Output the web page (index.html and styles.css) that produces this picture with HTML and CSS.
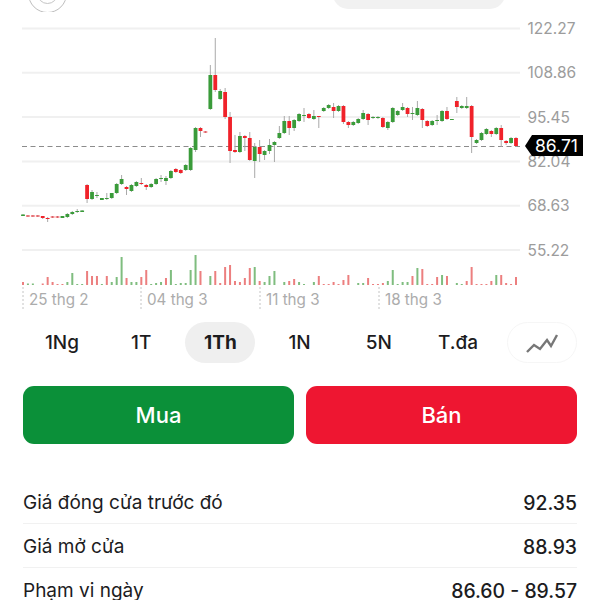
FILE: index.html
```html
<!DOCTYPE html>
<html lang="vi">
<head>
    <meta charset="UTF-8">
    <meta name="viewport" content="width=device-width, initial-scale=1.0">
    <title>Biểu đồ giá</title>
    <link rel="stylesheet" href="styles.css">
</head>
<body>
    <div class="page">
        <div class="topbar">
            <div class="round-btn"><div class="round-btn-inner"></div></div>
            <div class="top-pill"></div>
        </div>

        <svg class="chart" id="chart" width="600" height="300" viewBox="0 0 600 300" xmlns="http://www.w3.org/2000/svg"></svg>

        <div class="ranges">
            <button class="range">1Ng</button>
            <button class="range">1T</button>
            <button class="range active">1Th</button>
            <button class="range">1N</button>
            <button class="range">5N</button>
            <button class="range">T.đa</button>
            <button class="range chart-type">
                <svg width="34" height="22" viewBox="0 0 34 22" xmlns="http://www.w3.org/2000/svg">
                    <polyline class="trend" points="2,20 9,13 15,17 22,8 26,14 32,3"/>
                </svg>
            </button>
        </div>

        <div class="actions">
            <button class="action buy">Mua</button>
            <button class="action sell">Bán</button>
        </div>

        <div class="stats">
            <div class="stat"><span class="stat-name">Giá đóng cửa trước đó</span><span class="stat-value">92.35</span></div>
            <div class="stat"><span class="stat-name">Giá mở cửa</span><span class="stat-value">88.93</span></div>
            <div class="stat"><span class="stat-name">Phạm vi ngày</span><span class="stat-value">86.60 - 89.57</span></div>
        </div>
    </div>

    <script src="chart.js"></script>
</body>
</html>
```

FILE: styles.css
```css
html, body {
    margin: 0;
    padding: 0;
    background-color: white;
}
body {
    font-family: Inter, "Liberation Sans", sans-serif;
    color: #1c1c1e;
}
.page {
    width: 600px;
    height: 600px;
    overflow: hidden;
}
.topbar {
    display: flex;
    justify-content: space-between;
    height: 12px;
    padding: 0 95px 0 28px;
    overflow: hidden;
}
.round-btn {
    width: 37px;
    height: 37px;
    margin-top: -26px;
    border: 1px solid #bdbdbd;
    border-radius: 50%;
    display: flex;
    align-items: center;
    justify-content: center;
}
.round-btn-inner {
    width: 19px;
    height: 19px;
    border: 1px solid #c4c4c4;
    border-radius: 50%;
}
.top-pill {
    width: 172px;
    height: 30px;
    margin-top: -21px;
    background-color: #f1f1f1;
    border-radius: 15px;
}
.chart {
    display: block;
}
.grid-line {
    stroke: #f0f0f0;
    stroke-width: 2;
}
.last-line {
    stroke: #8c8c8c;
    stroke-width: 1;
    stroke-dasharray: 5 3.5;
}
.date-tick {
    stroke: #c4c4c4;
    stroke-width: 1;
    stroke-dasharray: 2 2;
}
.axis-label {
    font-size: 15.5px;
    fill: #9c9c9c;
}
.date-label {
    font-size: 15.2px;
    fill: #acacac;
}
.wick {
    stroke: #a9a9a9;
    stroke-width: 1;
}
.up {
    fill: #3a9b3a;
}
.down {
    fill: #f0222a;
}
.vol-up {
    fill: #7fbd7f;
}
.vol-down {
    fill: #ec7f7f;
}
.price-tag {
    fill: black;
}
.price-text {
    font-size: 17.5px;
    fill: white;
}
.ranges {
    display: flex;
    gap: 9.2px;
    padding: 0 23px 0 27px;
    margin-top: 10px;
}
.range {
    width: 70px;
    height: 41px;
    padding: 0;
    font-family: inherit;
    font-size: 19px;
    font-weight: 500;
    color: #1c1c1e;
    background: none;
    border: none;
    border-radius: 21px;
}
.range.active {
    font-weight: 700;
    background-color: #efefef;
}
.chart-type {
    display: flex;
    align-items: center;
    justify-content: center;
    margin-left: auto;
    border: 1px solid #f6f6f6;
}
.trend {
    fill: none;
    stroke: #777;
    stroke-width: 2.4;
}
.actions {
    display: flex;
    gap: 12px;
    padding: 0 23px;
    margin-top: 23px;
}
.action {
    flex: 1;
    height: 58px;
    font-family: inherit;
    font-size: 22px;
    font-weight: 500;
    color: white;
    border: none;
    border-radius: 11px;
}
.buy {
    background-color: #0b9039;
}
.sell {
    background-color: #ee1631;
}
.stats {
    margin: 36px 23px 0;
}
.stat {
    display: flex;
    justify-content: space-between;
    align-items: center;
    height: 41px;
    padding-top: 2px;
    border-bottom: 1px solid #f1f1f1;
}
.stat-name {
    font-size: 19px;
}
.stat-value {
    font-size: 19.4px;
    font-weight: 500;
}
```

FILE: chart.js
```js
// candles: [top, bottom, wickTop, wickBottom, up?] in chart pixels
const candles = [
    [214.5,216,214,216,1],[215.5,216.5,215,217,0],[215.5,216.5,215,217,0],[215.5,216.5,215,217,0],[216,218,216,219,0],
    [218,219,217,222,0],[216.5,217.5,216,218,0],[216.5,217.5,216,218,0],[216,218,216,218,1],[214,217,213,218,1],
    [212,214,211,215,1],[211,212,209,213,1],[210.5,212,210,212,1],[185,199,184,203,0],[192,199,190,200,1],
    [195,196,192,198,1],[198,200,198,200,1],[198,199,193,200,1],[193,198,193,199,1],[184,193,183,194,1],
    [179,184,175,185,1],[187,189,186,195,0],[185,191,184,192,1],[182,186,181,187,1],[183,184,178,185,0],
    [185,187,184,190,0],[184,187,183,188,1],[179,184,178,185,1],[178,179,175,182,1],[178,181,176,185,1],
    [171,178,170,179,1],[169,172,168,173,0],[170,173,169,174,0],[165,170,164,171,1],[148,170,147,171,1],
    [128,150,127,152,1],[128,131,127,137,0],[131.5,132.5,131,133,0],[75,109,65,110,1],[75,90,38,92,0],
    [91,99,89,100,1],[92,117,88,119,0],[117,151,112,163,0],[150,152,135,153,0],[136,152,132,153,1],
    [136,138,135,151,0],[138,160,132,161,0],[147,161,143,178,1],[147,154,140,162,0],[151,155,150,160,1],
    [145,151,139,154,1],[142,145,141,162,1],[133,138,126,139,1],[121,133,116,134,1],[121,128,116,135,0],
    [120,128,119,131,1],[114,121,113,122,1],[115,116,108,122,1],[114,118,113,119,0],[116,119,110,120,1],
    [116,117,116,128,0],[108,111,107,112,1],[105,108,104,109,1],[107,111,103,118,0],[106,111,105,112,1],
    [106,122,105,124,0],[122,125,121,128,0],[122,125,121,126,1],[119,123,118,124,1],[113,119,110,120,1],
    [114,120,113,125,0],[117,118,116,119,1],[117,118,116,119,1],[118,127,117,128,0],[122,128,121,130,1],
    [108,122,107,123,1],[111,115,110,116,1],[107,110,103,111,1],[108,114,107,117,0],[113,114,107,120,1],
    [108,115,101,116,1],[109,120,108,128,0],[121,126,120,127,0],[121,125,120,126,1],[120,121,115,125,1],
    [111,121,110,122,1],[111,119,107,120,0],[119,120,119,120,1],[101,107,97,113,0],[106,108,105,109,1],
    [106,108,97,109,1],[106,137,105,153,0],[140,143,139,144,1],[133,140,132,141,1],[129,134,128,135,1],
    [131,134,130,137,0],[128,134,127,135,1],[128,140,125,147,0],[141,143,140,145,0],[138,143,137,144,1],
    [138,146,137,147,0]
];

// volume heights, negative means a red bar
const volumes = [
    -3,1.5,1.5,0,-1.5,-8,-3,-1,-1,3,12,1,1,-14,-9,-9,1,-9,3,8,
    28,-7,3,3,-8,-15,1,2,3,-7,15,1,2,2,15,30,-14,0,9,-14,
    -2,-18,-20,-4,-3,-7,-17,18,-4,3,9,14,0,3,-4,-6,3,1,0,3,
    -9,-1,-1,-3,-1,-5,-10,0,2,2,-7,-1,-1,-2,4,15,1,3,3,-9,
    17,-16,-1,-1,-8,10,-9,0,2,1,-4,-18,-1,-1,-1,-4,10,-10,-2,-1,
    -8
];

const axisLabels = ['122.27', '108.86', '95.45', '82.04', '68.63', '55.22'];
const dates = [[23, '25 thg 2'], [141, '04 thg 3'], [260, '11 thg 3'], [379, '18 thg 3']];

const chart = document.getElementById('chart');
const baseY = -12; // the svg starts under the top bar

function add(tag, attrs, text) {
    const el = document.createElementNS('http://www.w3.org/2000/svg', tag);
    for (const key in attrs) {
        el.setAttribute(key, attrs[key]);
    }
    if (text) {
        el.textContent = text;
    }
    chart.appendChild(el);
    return el;
}

function candleX(i) {
    return 23 + i * 4.93;
}

axisLabels.forEach((label, i) => {
    const y = 28.5 + i * 44.3 + baseY;
    add('line', { class: 'grid-line', x1: 22, x2: 520, y1: y, y2: y });
    add('text', { class: 'axis-label', x: 527.5, y: y + 5.5 }, label);
});

add('line', { class: 'last-line', x1: 22, x2: 520, y1: 146.5 + baseY, y2: 146.5 + baseY });

candles.forEach((c, i) => {
    const x = candleX(i);
    add('line', { class: 'wick', x1: x, x2: x, y1: c[2] + baseY, y2: c[3] + baseY });
    add('rect', {
        class: c[4] ? 'up' : 'down',
        x: x - 1.9,
        y: c[0] + baseY,
        width: 3.8,
        height: c[1] - c[0]
    });
});

volumes.forEach((v, i) => {
    if (v === 0) return;
    const h = Math.abs(v);
    add('rect', {
        class: v > 0 ? 'vol-up' : 'vol-down',
        x: candleX(i) - 1,
        y: 285 - h + baseY,
        width: 2,
        height: h
    });
});

dates.forEach(d => {
    add('line', { class: 'date-tick', x1: d[0], x2: d[0], y1: 287 + baseY, y2: 309 + baseY });
    add('text', { class: 'date-label', x: d[0] + 6, y: 305 + baseY }, d[1]);
});

add('path', { class: 'price-tag', d: 'M525 146 L532 135 H583 V156 H532 Z', transform: 'translate(0 ' + baseY + ')' });
add('text', { class: 'price-text', x: 535, y: 152 + baseY }, '86.71');
```
